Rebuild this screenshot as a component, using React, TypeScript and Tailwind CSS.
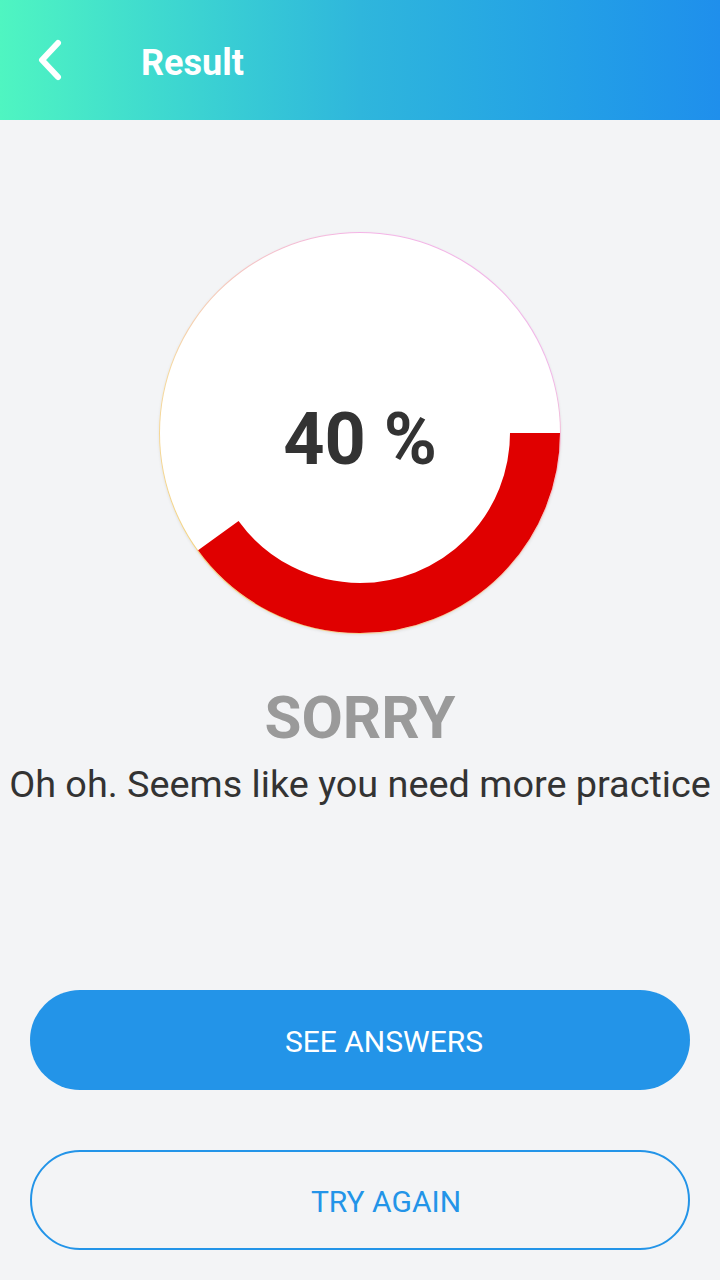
const FONT = { fontFamily: "Roboto, 'Noto Sans', sans-serif" };

function ScoreRing({ percent }: { percent: number }) {
  // red arc starts at 3 o'clock and runs clockwise
  const r = 175;
  const c = 2 * Math.PI * r;
  const len = (percent / 100) * c;
  return (
    <div className="relative w-[402px] h-[402px] rounded-full p-px bg-[conic-gradient(from_0deg,#f4b3e6,#f0b8e8,#f5d0a8,#f2d27a,#f5d8a0,#f4b3e6)] shadow-[0_1px_3px_rgba(0,0,0,0.08)]">
      <div className="relative w-full h-full rounded-full bg-white">
        <svg className="absolute inset-0" width="400" height="400" viewBox="0 0 400 400">
          <circle
            cx="200"
            cy="200"
            r={r}
            fill="none"
            stroke="#e00000"
            strokeWidth="50"
            strokeDasharray={`${len} ${c}`}
          />
        </svg>
        <div className="absolute inset-0 flex items-center justify-center">
          <span className="text-[72px] font-bold text-[#333333] leading-none mt-[14px]">{percent} %</span>
        </div>
      </div>
    </div>
  );
}

export default function App() {
  return (
    <div className="w-[720px] h-[1280px] bg-[#f3f4f6] flex flex-col" style={FONT}>
      {/* Header */}
      <header className="h-[120px] shrink-0 flex items-center bg-gradient-to-r from-[#4ff5c1] via-[#2fb6dc] to-[#1f8fec]">
        <button className="w-[100px] h-full flex items-center pl-[34px]">
          <svg width="30" height="44" viewBox="0 0 30 44" fill="none">
            <path d="M24 5 L8 22 L24 39" stroke="white" strokeWidth="6" strokeLinecap="round" strokeLinejoin="round" />
          </svg>
        </button>
        <h1 className="ml-[41px] text-white font-bold text-[36px] leading-none mt-[6px]">Result</h1>
      </header>

      {/* Score */}
      <div className="flex justify-center pt-[112px]">
        <ScoreRing percent={40} />
      </div>

      <div className="flex flex-col items-center mt-[54px]">
        <h2 className="text-[60px] font-bold text-[#9a9a9a] leading-none">SORRY</h2>
        <p className="mt-[18px] text-[37.8px] text-[#333333] leading-none whitespace-nowrap">
          Oh oh. Seems like you need more practice
        </p>
      </div>

      {/* Actions */}
      <div className="flex flex-col gap-[60px] px-[30px] mt-auto mb-[30px]">
        <button className="h-[100px] rounded-full bg-[#2394e8] text-white text-[30px] leading-none pl-[48px] pt-[3px]">
          SEE ANSWERS
        </button>
        <button className="h-[100px] rounded-full border-2 border-[#2394e8] text-[#2394e8] text-[30px] leading-none pl-[52px] pt-[3px]">
          TRY AGAIN
        </button>
      </div>
    </div>
  );
}
